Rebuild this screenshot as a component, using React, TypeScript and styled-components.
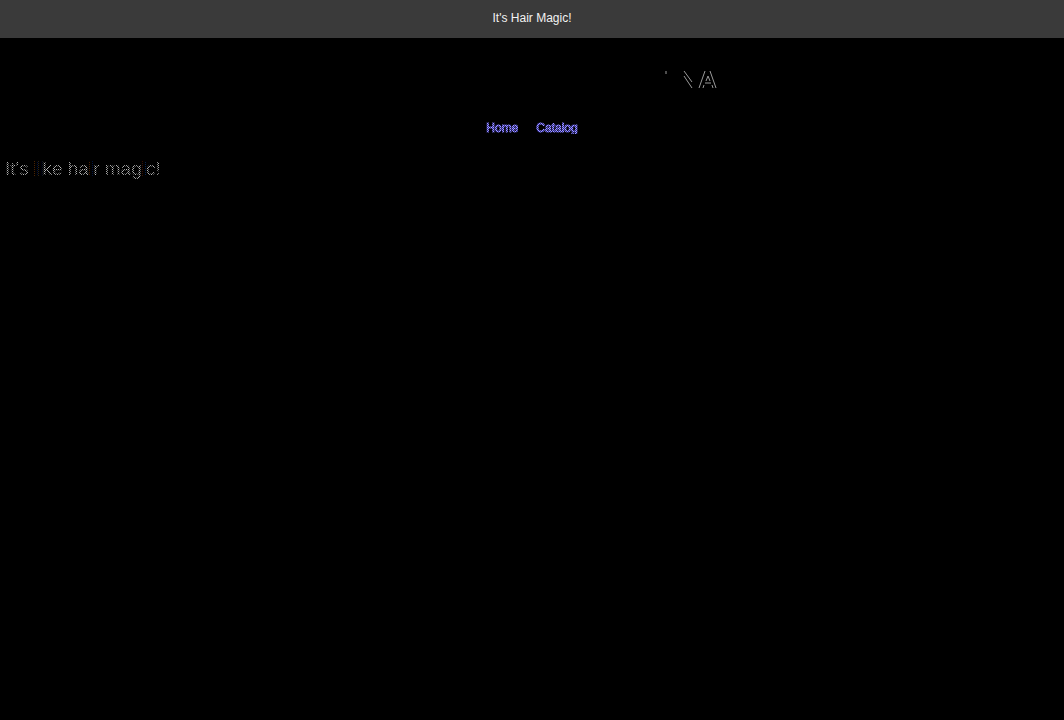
import React from "react";
import styled, { createGlobalStyle } from "styled-components";

const GlobalStyle = createGlobalStyle`
  body {
    margin: 0;
    background: #000;
    color: #000;
    font-family: "Liberation Sans", Arial, sans-serif;
  }
`;

const Announcement = styled.p`
  margin: 0;
  padding: 8px 16px 10px;
  background: #3a3a3a;
  color: #f2f2f2;
  font-size: 12px;
  line-height: 20px;
  text-align: center;
`;

const Header = styled.header`
  display: flex;
  flex-direction: column;
  align-items: center;
  gap: 24px;
  padding: 24px 0;
`;

const LogoLink = styled.a`
  display: flex;
  width: 400px;
  height: 36px;
  justify-content: flex-end;
  align-items: center;
`;

const Nav = styled.nav`
  display: flex;
  gap: 18px;
`;

const NavLink = styled.a`
  background: repeating-conic-gradient(#2e28a0 0 25%, #a8a2ff 0 50%) 0 0 / 2px 2px;
  background-clip: text;
  -webkit-text-stroke: 1px transparent;
  color: transparent;
  font-size: 12px;
  line-height: 12px;
  text-decoration: none;
`;

const Tagline = styled.h1`
  display: inline-block;
  margin: 0 5px;
  background: repeating-conic-gradient(#000 0 25%, #b4b4b4 0 50%) 0 0 / 2px 2px;
  background-clip: text;
  color: transparent;
  font-size: 19px;
  font-weight: 400;
  line-height: 22px;
`;

const Faint = styled.span`
  color: #000;
  -webkit-text-stroke: 2px #000;
`;

export default function App() {
  return (
    <>
      <GlobalStyle />
      <Announcement>It's Hair Magic!</Announcement>
      <Header>
        <LogoLink href="#" aria-label="Store home">
          <svg width="84" height="28" viewBox="0 0 84 28" fill="none" stroke="#9a9a9a" aria-hidden="true">
            <path d="M18 5v3M36 5l8 11M36 10l8 12M51 22l6-17M55 22l1-3M58 15l2-5 2 5M57 17h6M62 5l6 17M64 19l1 3" />
          </svg>
        </LogoLink>
        <Nav aria-label="Main">
          <NavLink href="#">Home</NavLink>
          <NavLink href="#catalog">Catalog</NavLink>
        </Nav>
      </Header>
      <main>
        <Tagline>
          It's <Faint>li</Faint>ke ha<Faint>i</Faint>r mag<Faint>i</Faint>c!
        </Tagline>
      </main>
    </>
  );
}
